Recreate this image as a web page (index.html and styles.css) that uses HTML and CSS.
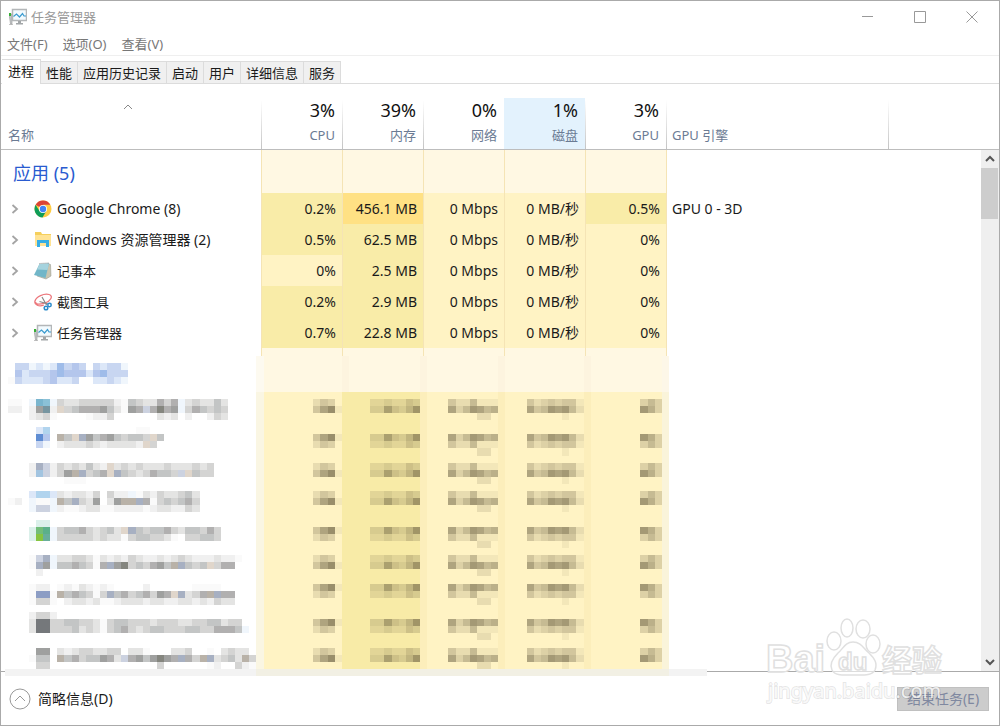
FILE: index.html
```html
<!DOCTYPE html>
<html lang="zh-CN">
<head>
<meta charset="utf-8">
<title>任务管理器</title>
<link rel="stylesheet" href="styles.css">
</head>
<body>
<!-- shared icons -->
<svg class="defs" aria-hidden="true">
	<symbol id="taskmgr" viewBox="0 0 18 18">
		<path d="M0 6h3v10H1.500zM0 16.500h4" fill="#c4c8ca" stroke="#999" stroke-width=".6"/>
		<path d="M1 5v3" stroke="#35b035" stroke-width="2"/>
		<rect x="3.500" y="1.500" width="14" height="11" fill="#f2fafe" stroke="#b3b6b8" stroke-width="1.500"/>
		<path d="M4.500 8.500l3-2.500 3 3 3-3.500 1.500 2.500h2" fill="none" stroke="#3b9bd0" stroke-width="1.200"/>
		<path d="M9 13h3v2h2v1.500H7V15h2z" fill="#a2a6a8"/>
	</symbol>
	<symbol id="arrow" viewBox="0 0 8 10">
		<path d="M1.500 1l4.500 4-4.500 4" fill="none" stroke="#a4a4a4" stroke-width="1.800"/>
	</symbol>
</svg>

<div class="window">
	<div class="titlebar">
		<svg class="icon"><use href="#taskmgr"/></svg>
		<h1>任务管理器</h1>
		<div class="winbuttons">
			<button type="button" aria-label="最小化"><svg viewBox="0 0 12 12"><path d="M0 5.500h11"/></svg></button>
			<button type="button" aria-label="最大化"><svg viewBox="0 0 12 12"><path d="M.5.5h11v11H.5z"/></svg></button>
			<button type="button" aria-label="关闭"><svg viewBox="0 0 12 12"><path d="M.5.5l11 11M11.500.5l-11 11"/></svg></button>
		</div>
	</div>

	<div class="menubar">
		<button type="button">文件(F)</button>
		<button type="button">选项(O)</button>
		<button type="button">查看(V)</button>
	</div>

	<div class="tabs" role="tablist">
		<button type="button" role="tab" class="active" aria-selected="true">进程</button>
		<button type="button" role="tab">性能</button>
		<button type="button" role="tab">应用历史记录</button>
		<button type="button" role="tab">启动</button>
		<button type="button" role="tab">用户</button>
		<button type="button" role="tab">详细信息</button>
		<button type="button" role="tab">服务</button>
	</div>

	<div class="main">
		<div class="list">
			<table>
				<colgroup>
					<col class="c-name"><col class="c-val"><col class="c-val"><col class="c-val"><col class="c-val"><col class="c-val"><col class="c-engine"><col>
				</colgroup>
				<thead>
					<tr>
						<th class="name">
							<svg class="sort" viewBox="0 0 10 6"><path d="M1 5l4-4 4 4"/></svg>
							<span>名称</span>
						</th>
						<th><b>3%</b><span>CPU</span></th>
						<th><b>39%</b><span>内存</span></th>
						<th><b>0%</b><span>网络</span></th>
						<th class="hover"><b>1%</b><span>磁盘</span></th>
						<th><b>3%</b><span>GPU</span></th>
						<th class="engine"><span>GPU 引擎</span></th>
						<th></th>
					</tr>
				</thead>
				<tbody>
					<tr class="group"><td class="name">应用 (5)</td><td></td><td></td><td></td><td></td><td></td><td class="engine"></td><td></td></tr>
					<tr>
						<td class="name"><div class="proc"><button type="button" aria-label="展开"><svg><use href="#arrow"/></svg></button>
							<svg class="icon" viewBox="0 0 18 18">
								<circle cx="9" cy="9" r="8.500" fill="#fc4"/>
								<path d="M9 9L1.600 4.800A8.500 8.500 0 0 1 16.400 4.800H9z" fill="#db4437"/>
								<path d="M1.600 4.800A8.500 8.500 0 0 0 8.500 17.500L12.300 11 9 9 5.500 11z" fill="#0f9d58"/>
								<circle cx="9" cy="9" r="4" fill="#fff"/><circle cx="9" cy="9" r="3.200" fill="#4285f4"/>
							</svg>Google Chrome (8)</div></td>
						<td class="mid">0.2%</td><td class="high">456.1 MB</td><td>0 Mbps</td><td>0 MB/秒</td><td class="mid">0.5%</td><td class="engine">GPU 0 - 3D</td><td></td>
					</tr>
					<tr>
						<td class="name"><div class="proc"><button type="button" aria-label="展开"><svg><use href="#arrow"/></svg></button>
							<svg class="icon" viewBox="0 0 18 18">
								<path d="M1 1h6l1 2h9v11H1z" fill="#f5cf5c"/>
								<path d="M1 4h16v11H1z" fill="#ffe394"/>
								<path d="M3 9h12v7h-3v-4H6v4H3z" fill="#36aee5"/>
							</svg>Windows 资源管理器 (2)</div></td>
						<td class="mid">0.5%</td><td class="mid">62.5 MB</td><td>0 Mbps</td><td>0 MB/秒</td><td>0%</td><td class="engine"></td><td></td>
					</tr>
					<tr>
						<td class="name"><div class="proc zh"><button type="button" aria-label="展开"><svg><use href="#arrow"/></svg></button>
							<svg class="icon" viewBox="0 0 18 18">
								<path d="M14 1.500l2.500 1L17 14l-5 3-9-3z" fill="#c9c5b0" stroke="#8f938c" stroke-width=".5"/>
								<path d="M5.500 2L15 1.500 11.500 16 0 13z" fill="#72b6c8"/>
								<path d="M5.500 2L15 1.500 13.500 8 3 7.500z" fill="#a5d3de"/>
								<path d="M5.500 1.500L15 1" stroke="#888" stroke-width="1" stroke-dasharray="1 1"/>
							</svg>记事本</div></td>
						<td>0%</td><td class="mid">2.5 MB</td><td>0 Mbps</td><td>0 MB/秒</td><td>0%</td><td class="engine"></td><td></td>
					</tr>
					<tr>
						<td class="name"><div class="proc zh"><button type="button" aria-label="展开"><svg><use href="#arrow"/></svg></button>
							<svg class="icon" viewBox="0 0 18 18">
								<path d="M10 12C5 14 0 12 1 8S10 0 15 1.500s1 7-4 8.500-9 2-9.500-1" fill="none" stroke="#ec777c" stroke-width="1.300"/>
								<path d="M8 4l4.500 8M5.500 8.500L14 11" stroke="#888" stroke-width="1.200"/>
								<circle cx="12" cy="15" r="1.800" fill="none" stroke="#2b8ccc" stroke-width="1.500"/>
								<circle cx="15.500" cy="12" r="1.700" fill="none" stroke="#2b8ccc" stroke-width="1.500"/>
							</svg>截图工具</div></td>
						<td class="mid">0.2%</td><td class="mid">2.9 MB</td><td>0 Mbps</td><td>0 MB/秒</td><td>0%</td><td class="engine"></td><td></td>
					</tr>
					<tr>
						<td class="name"><div class="proc zh"><button type="button" aria-label="展开"><svg><use href="#arrow"/></svg></button>
							<svg class="icon"><use href="#taskmgr"/></svg>任务管理器</div></td>
						<td class="mid">0.7%</td><td class="mid">22.8 MB</td><td>0 Mbps</td><td>0 MB/秒</td><td>0%</td><td class="engine"></td><td></td>
					</tr>
					<tr class="spacer"><td class="name"></td><td></td><td></td><td></td><td></td><td></td><td class="engine"></td><td></td></tr>
				</tbody>
			</table>
			<svg id="mosaic" class="mosaic" viewBox="0 0 100 45" aria-hidden="true"></svg>
		</div>
		<div class="scrollbar">
			<button type="button" aria-label="向上滚动"><svg viewBox="0 0 10 8"><path d="M1 6l4-4 4 4"/></svg></button>
			<div class="thumb"></div>
			<button type="button" class="down" aria-label="向下滚动"><svg viewBox="0 0 10 8"><path d="M1 2l4 4 4-4"/></svg></button>
		</div>
	</div>

	<div class="footer">
		<button type="button" class="less">
			<svg viewBox="0 0 22 22"><circle cx="11" cy="11" r="10"/><path d="M6 13l5-5 5 5"/></svg>
			简略信息(D)
		</button>
		<button type="button" class="end" disabled>结束任务(E)</button>
	</div>

	<svg class="watermark" viewBox="0 0 184 92" aria-hidden="true">
		<g class="logo">
			<text class="bai" x="1" y="49">Bai</text>
			<ellipse cx="69" cy="18" rx="7" ry="9"/>
			<ellipse cx="82" cy="5" rx="6" ry="9"/>
			<ellipse cx="98" cy="6" rx="7" ry="9"/>
			<ellipse cx="108" cy="21" rx="7" ry="9"/>
			<path d="M88 19c-8 0-10 7-15 11-5 5-9 11-6 17 3 6 11 5 21 5s19 1 22-5c3-7-1-12-6-17-5-4-8-11-16-11z"/>
			<text class="du" x="73" y="47">du</text>
			<text class="jy" x="117" y="48">经验</text>
		</g>
		<text class="url" x="3" y="75">jingyan.baidu.com</text>
	</svg>
</div>
<script src="mosaic.js"></script>
</body>
</html>
```

FILE: styles.css
```css
*
{
	box-sizing:border-box;
}
body
{
	margin:0;
	font-family:"Noto Sans","Noto Sans CJK SC",sans-serif;
	font-size:13px;
	line-height:20px;
	color:#1a1a1a;
	background:#fff;
}
button
{
	font:inherit;
	color:inherit;
	background:none;
	border:none;
	padding:0;
	margin:0;
}
.defs
{
	position:absolute;
	width:0;
	height:0;
}
.window
{
	position:relative;
	display:flex;
	flex-direction:column;
	min-height:100vh;
	border:1px solid #aaa;
	overflow:hidden;
}
.icon
{
	width:18px;
	height:18px;
	flex:none;
}

/* title and menus */
.titlebar
{
	display:flex;
	align-items:center;
	height:32px;
	padding-left:8px;
	color:#999;
}
.titlebar h1
{
	flex:1;
	margin:0 0 0 4px;
	font-size:13px;
	font-weight:normal;
}
.winbuttons
{
	display:flex;
	padding-right:1px;
}
.winbuttons button
{
	display:flex;
	align-items:center;
	justify-content:center;
	width:52px;
	height:32px;
}
.winbuttons svg
{
	width:12px;
	height:12px;
	fill:none;
	stroke:#999;
}
.menubar
{
	display:flex;
	gap:15px;
	height:23px;
	padding:0 6px;
	color:#777;
	border-bottom:1px solid #efefef;
}
.tabs
{
	display:flex;
	align-items:flex-end;
	height:28px;
	padding-left:1px;
	border-bottom:1px solid #dcdcdc;
}
.tabs button
{
	height:22px;
	padding:0 5px;
	background:#f0f0f0;
	border:1px solid #dcdcdc;
	border-left:none;
	border-bottom:none;
}
.tabs .active
{
	height:25px;
	padding:0 6px 3px;
	margin-bottom:-1px;
	background:#fff;
}

/* process list */
.main
{
	display:flex;
	flex:1;
	border-bottom:1px solid #aaa;
}
.list
{
	flex:1;
	min-width:0;
}
table
{
	width:100%;
	table-layout:fixed;
	border-collapse:separate;
	border-spacing:0;
}
.c-name
{
	width:260px;
}
.c-val
{
	width:81px;
}
.c-engine
{
	width:222px;
}
th
{
	height:66px;
	padding:14px 7px 4px 0;
	text-align:right;
	vertical-align:bottom;
	font-weight:normal;
	color:#6b7b94;
	border-bottom:1px solid #bdbdbd;
	background:linear-gradient(#fff,#c4c4c4) left bottom / 1px 49px no-repeat;
}
th b
{
	display:block;
	margin-bottom:4px;
	font-size:18px;
	line-height:22px;
	font-weight:normal;
	color:#111;
}
th span
{
	display:block;
}
th.name
{
	padding-left:7px;
	text-align:left;
	background:none;
}
th.hover
{
	background:linear-gradient(#e3f2fd,#e3f2fd) left bottom / 100% 51px no-repeat;
}
th.engine
{
	padding-left:6px;
	text-align:left;
}
.sort
{
	display:block;
	width:10px;
	height:6px;
	margin:0 0 15px 115px;
	fill:none;
	stroke:#888;
}
td
{
	height:31px;
	padding:0 6px 0 0;
	text-align:right;
	font-size:14px;
	white-space:nowrap;
	background:#fff3c4;
	border-left:1px solid #f5e4b5;
}
td.mid
{
	background:#f9eca8;
}
td.high
{
	background:#ffe184;
}
td.name, td:last-child
{
	text-align:left;
	background:none;
	border-left:none;
}
td.engine
{
	padding-left:5px;
	text-align:left;
	background:none;
}
.group td, .spacer td
{
	background:#fff8e3;
}
.group td
{
	height:43px;
}
.group .name
{
	padding:3px 0 0 12px;
	font-size:18px;
	color:#2a5bd0;
}
.group .name, .group .engine, .spacer .name, .spacer .engine, .group td:last-child, .spacer td:last-child
{
	background:none;
}
.spacer td
{
	height:8px;
}
.proc
{
	display:flex;
	align-items:center;
	padding-left:10px;
}
.proc.zh
{
	font-size:13px;
}
.proc button
{
	display:flex;
	width:23px;
}
.proc button svg
{
	width:8px;
	height:10px;
}
.proc .icon
{
	margin-right:5px;
}
.mosaic
{
	display:block;
	position:relative;
	width:712px;
	height:320px;
	margin:0 0 -6px -1px;
	shape-rendering:crispEdges;
}

/* scrollbar */
.scrollbar
{
	display:flex;
	flex-direction:column;
	width:18px;
	margin-top:65px;
	border-top:1px solid #bdbdbd;
	background:#efefef;
}
.scrollbar button
{
	display:flex;
	align-items:center;
	justify-content:center;
	height:18px;
}
.scrollbar .down
{
	margin-top:auto;
}
.scrollbar svg
{
	width:10px;
	height:8px;
	fill:none;
	stroke:#555;
	stroke-width:2;
}
.thumb
{
	height:51px;
	margin-right:1px;
	background:#cdcdcd;
}

.footer
{
	display:flex;
	align-items:center;
	justify-content:space-between;
	height:53px;
	padding:0 10px 0 8px;
}
.less
{
	display:flex;
	align-items:center;
	gap:7px;
	font-size:14px;
}
.less svg
{
	width:22px;
	height:22px;
	fill:none;
	stroke:#999;
}
.end
{
	width:92px;
	height:24px;
	font-size:14px;
	color:#7f88a0;
	background:#ccc;
	border:1px solid #c0c0c0;
}

/* watermark lies over the list and the footer */
.watermark
{
	position:absolute;
	right:50px;
	bottom:10px;
	width:184px;
	height:92px;
	overflow:visible;
	pointer-events:none;
}
.logo
{
	fill:rgba(255,255,255,.6);
	stroke:#e0e0e0;
	stroke-width:1.5;
}
.logo text
{
	font-family:"Liberation Sans",sans-serif;
	font-weight:bold;
}
.bai
{
	font-size:38px;
}
.du
{
	font-size:24px;
}
.logo .jy
{
	font-size:30px;
	font-family:"Noto Sans CJK SC",sans-serif;
}
.url
{
	font-family:"Noto Sans",sans-serif;
	font-size:20px;
	fill:rgba(255,255,255,.8);
	stroke:rgba(0,0,0,.1);
	stroke-width:2;
	paint-order:stroke;
}
```

FILE: mosaic.js
```js
// pixelated part of the list, one character per cell
var colors = {
	a:"#fafafa", b:"#f0f0f0", c:"#e4e4e3", d:"#d4d4d3", e:"#c3c5c5", f:"#b1b0b0", g:"#9fa09f", h:"#85867f",
	w:"#e0d6cb", v:"#b9b2a8", p:"#ccd2e0", q:"#a7b0c2", y:"#7795a0",
	1:"#f0f6fc", 2:"#dce7f8", 3:"#c8d6f1", 4:"#b4c6ec", 5:"#9fbce9",
	T:"#79b5ce", U:"#8bc1d7", L:"#b1d4ee", B:"#5f8dd3", M:"#a2c4e0", Q:"#8c9dc4",
	t:"#dbf0ea", G:"#72bd79", H:"#5bb08a", I:"#86c440", J:"#68ae9b", K:"#75787b"
};

// row number: cells from the left edge
var names = {
	1: "..3312125343.32331",
	2: "..4233345444245333",
	3: ".a322234223..22321",
	6: ".aa.1TU1dccdddddbaedccfdf1cdccec",
	7: ".bb.bgybwdefffgecagfpfhfg1dfeded",
	8: "....bcda....abbd......cbc.b..bdc",
	10: ".....2L............aa",
	11: ".....B4.vewqgefgedeedwe",
	12: ".....31.bcccdcbccccbwd",
	15: "....bqpbdcdcecbwcdcdcccdcccdcd",
	16: "....bMpbdgvqdefwqedcdfeedpwedd",
	17: ".........aaa",
	19: "....2LL2cbccbd.dbb1acbdccdec.",
	20: ".ab.1aa1veqdcg.cgvvqfadedefd",
	21: "....1pp1baabccaabbbbabccbbdc",
	23: ".....tt",
	24: "....tGH1deefdcdecwqedeefdceedfd",
	25: "....tIJ1dddddcdccadeeddca.ddeed",
	28: "....apq1ccddcacbcbdcbbcbcdcbbbcbba",
	29: "....aqg1eefedafqghdedfgevqedewdff",
	30: ".....b",
	32: "....abb.abacbaba....b......aaaa",
	33: "....aQQavefedadqefdefdgfwqcdfvqff",
	34: "....adda.bccbcaabcccbccbbccbcbdcc",
	36: "....bddb",
	37: "....cKKddeeddcadeedddcdddccddeecdd",
	38: "....cKKdddecdcadefdcdeedddeeddfffe1",
	41: ".....gg.cbcddccdd.cca...ccd..a.cdcc",
	42: "....aee.vefdeegfcpfgeghgfqfdvqcdecvd",
	43: ".....dd...............d......ab..dba"
};

// the value columns start at cell 44
var dark  = "4791....3374358....7358756....74587852........863";
var light = "243.....2232243....4225111....42343441........353";
var faint = ".......................22..........1";
var values = [[6,7], [12,11], [15,16], [19,20], [25,24], [28,29], [33,32], [38,37], [41,42]];

var svg = document.getElementById("mosaic");

function rect(x, y, w, h, fill)
{
	var r = document.createElementNS("http://www.w3.org/2000/svg", "rect");
	r.setAttribute("x", x);
	r.setAttribute("y", y);
	r.setAttribute("width", w);
	r.setAttribute("height", h);
	r.setAttribute("fill", fill);
	svg.appendChild(r);
}

function cells(text, x, y, pick)
{
	for (var i = 0; i < text.length; i++)
		if (text[i] != ".")
			rect(x + i, y, 1, 1, pick(text[i]));
}

// columns
rect(36, 0, 58, 5, "#fff8e3");
rect(36, 5, 58, 39, "#fff3c4");
rect(48, 5, 11, 39, "#f8eba7");
rect(36, 5, 1, 39, "#faf6e3");
rect(93, 5, 1, 39, "#faf4da");
[59, 70, 82].forEach(function (x) {
	rect(x, 0, 1, 5, "#fdf4df");
	rect(x, 5, 1, 39, "#fceebb");
});
rect(48, 0, 1, 5, "#fdf4df");
rect(36, 0, 1, 5, "#fdfaf0");
rect(93, 0, 1, 5, "#fdf7e8");

for (var y in names)
	cells(names[y], 0, +y, function (c) { return colors[c]; });

function shade(c) { return "rgba(80,70,45," + c * 0.065 + ")"; }
values.forEach(function (v) {
	cells(light, 44, v[0], shade);
	cells(dark, 44, v[1], shade);
	cells(faint, 44, Math.max(v[0], v[1]) + 1, shade);
});

// bottom edge
rect(0.6, 44, 98.700, 1, "#f3f3f3");
rect(36, 44, 58, 1, "#f2f0e4");
```
